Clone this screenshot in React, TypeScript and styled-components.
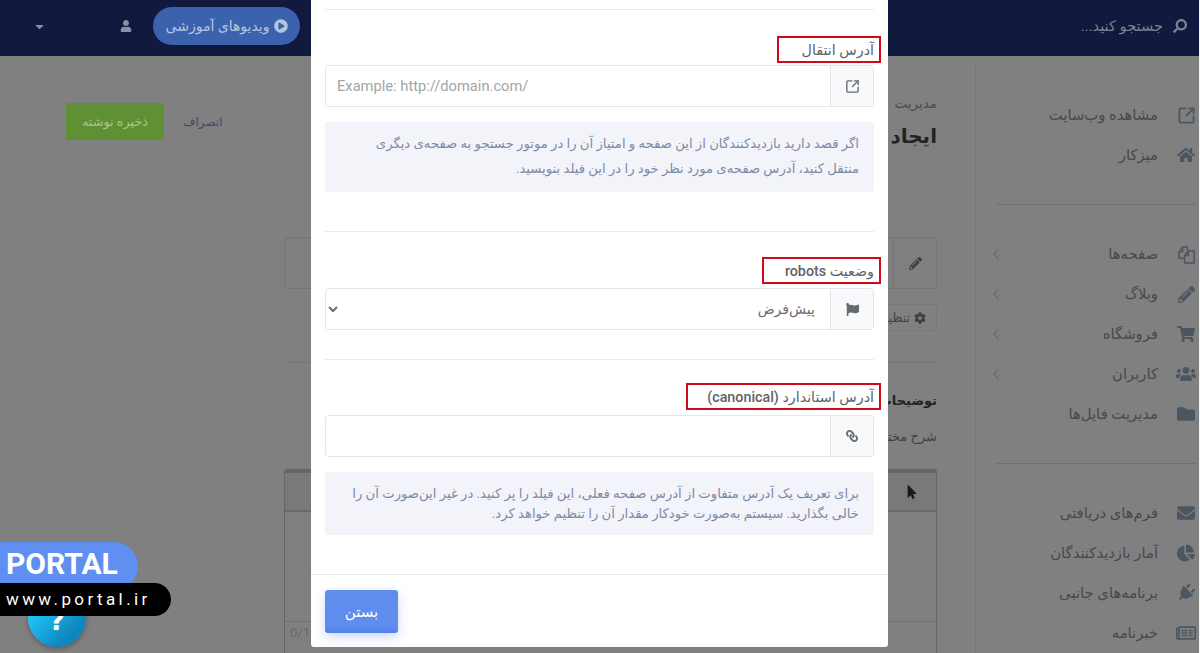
import React from 'react';
import styled, { createGlobalStyle } from 'styled-components';
import {
  FaCaretDown, FaChartPie, FaCog, FaEnvelope, FaFlag, FaFolder, FaHome, FaLink, FaMousePointer,
  FaPencilAlt, FaPlayCircle, FaPlug, FaRegNewspaper, FaSearch, FaShoppingCart, FaUser, FaUsers,
} from 'react-icons/fa';
import { ChevronLeft, SquareArrowOutUpRight } from 'lucide-react';

const GlobalStyle = createGlobalStyle`
  html, body {
    margin: 0;
    padding: 0;
    height: 100%;
    overflow: hidden;
    font-family: Roboto, "DejaVu Sans", sans-serif;
  }
  * {
    box-sizing: border-box;
  }
`;

const Page = styled.div`
  position: relative;
  width: 100%;
  height: 653px;
  overflow: hidden;
  display: flex;
  flex-direction: column;
  background: #808080;
  border-right: 1px solid #f4f4f4;
`;

const Header = styled.header`
  height: 56px;
  flex: none;
  background: #111a3e;
  direction: rtl;
  display: flex;
  align-items: center;
  padding: 0 12px 4px 33px;
`;

const SearchBox = styled.div`
  display: flex;
  align-items: center;
  gap: 10px;
  color: #7d8194;
  font-size: 14.6px;
`;

const Mirrored = styled.span`
  display: inline-flex;
  transform: scaleX(-1);
`;

const HeaderTools = styled.div`
  margin-right: auto;
  display: flex;
  align-items: center;
`;

const VideoPill = styled.div`
  width: 147px;
  height: 38px;
  border-radius: 19px;
  background: #3a62ad;
  color: #b6c5e0;
  font-size: 14px;
  display: flex;
  align-items: center;
  justify-content: center;
  gap: 4px;
  white-space: nowrap;
`;

const UserIcon = styled.span`
  display: inline-flex;
  color: #8b91a5;
  margin-right: 21px;
`;

const CaretIcon = styled.span`
  display: inline-flex;
  color: #8b91a5;
  margin-right: 74px;
`;

const Body = styled.div`
  flex: 1;
  min-height: 0;
  display: flex;
  direction: rtl;
`;

const Sidebar = styled.nav`
  width: 224px;
  flex: none;
  margin-top: 8px;
  padding: 31px 3px 0 20px;
  border-left: 1px solid #787878;
`;

const NavGroup = styled.div`
  padding-bottom: 29px;
  margin-bottom: 29px;
  border-bottom: 1px solid #707070;

  &:last-child {
    border-bottom: 0;
  }
`;

const NavItem = styled.div`
  height: 40px;
  display: flex;
  align-items: center;
  gap: 18px;
  color: #47494b;
  font-size: 14.8px;
  white-space: nowrap;
`;

const NavIcon = styled.span`
  width: 20px;
  display: inline-flex;
  justify-content: center;
  color: #4c5661;
`;

const NavArrow = styled.span`
  margin-right: auto;
  margin-left: -9px;
  display: inline-flex;
  color: #585c60;
`;

const Main = styled.main`
  flex: 1;
  min-width: 0;
  padding: 38px 38px 0 66px;
`;

const TitleRow = styled.div`
  display: flex;
  justify-content: space-between;
  align-items: flex-start;
  height: 143px;
`;

const Crumb = styled.div`
  color: #4a4a4a;
  font-size: 13.5px;
  line-height: 18px;
`;

const PageTitle = styled.h1`
  margin: 9px 0 0;
  color: #1f2327;
  font-size: 20px;
  line-height: 30px;
  font-weight: 700;
`;

const Actions = styled.div`
  display: flex;
  align-items: center;
  gap: 19px;
  margin-top: 9px;
`;

const CancelLink = styled.span`
  color: #3f4a66;
  font-size: 12px;
`;

const SaveButton = styled.div`
  width: 98px;
  height: 37px;
  border-radius: 2px;
  background: #5f9033;
  color: #a9c48e;
  font-size: 12.8px;
  display: flex;
  align-items: center;
  justify-content: center;
`;

const Form = styled.div`
  margin-left: 218px;
`;

const TitleField = styled.div`
  height: 52px;
  border: 1px solid #747474;
  border-radius: 4px;
  display: flex;
`;

const TitleAddon = styled.div`
  width: 43px;
  border-left: 1px solid #747474;
  display: flex;
  align-items: center;
  justify-content: center;
  color: #3f4143;
`;

const SettingsTab = styled.div`
  width: 130px;
  height: 27px;
  margin-top: 15px;
  border: 1px solid #787878;
  border-radius: 2px;
  display: flex;
  align-items: center;
  gap: 4px;
  padding-right: 10px;
  color: #3f4143;
  font-size: 12.5px;
  white-space: nowrap;
`;

const FormDivider = styled.div`
  height: 1px;
  margin-top: 31px;
  background: #767676;
`;

const DescTitle = styled.div`
  margin-top: 28px;
  color: #1f2327;
  font-size: 13px;
  line-height: 20px;
  font-weight: 700;
`;

const DescHint = styled.div`
  margin-top: 16px;
  color: #3f4143;
  font-size: 13px;
  line-height: 20px;
`;

const Editor = styled.div`
  height: 240px;
  margin-top: 22px;
  border: 1px solid #666;
  border-top-width: 4px;
  border-radius: 3px 3px 0 0;
  display: flex;
  flex-direction: column;
`;

const EditorToolbar = styled.div`
  height: 39px;
  flex: none;
  background: #797979;
  border-bottom: 2px solid #686868;
  display: flex;
  align-items: center;
  padding-right: 17px;
  color: #16191d;
`;

const EditorArea = styled.div`
  height: 110px;
  flex: none;
  border-bottom: 1px solid #707070;
`;

const EditorStatus = styled.div`
  direction: ltr;
  padding: 3px 5px;
  color: #6a6a6a;
  font-size: 13px;
`;

const Modal = styled.section`
  position: absolute;
  top: 0;
  left: 311px;
  width: 577px;
  height: 647px;
  padding-top: 9px;
  background: #fff;
  border-radius: 0 0 3px 3px;
  direction: rtl;
  display: flex;
  flex-direction: column;
`;

const ModalBody = styled.div`
  flex: 1;
  padding: 0 14px;
`;

const Section = styled.div`
  border-top: 1px solid #e9ebee;
  padding-top: ${p => p.$top}px;
  height: ${p => p.$height}px;
`;

const LabelRow = styled.div`
  margin: 0 -7px ${p => p.$gap}px 0;
  display: flex;
`;

const MarkedLabel = styled.label`
  width: ${p => p.$width}px;
  height: 27px;
  border: 2px solid #cf0a1a;
  padding: 0 5px;
  display: flex;
  align-items: center;
  color: #606367;
  font-size: 14.3px;
  font-weight: 500;
  white-space: nowrap;
`;

const InputGroup = styled.div`
  height: 42px;
  border: 1px solid #e3e5e9;
  border-radius: 4px;
  display: flex;
  overflow: hidden;
`;

const Addon = styled.span`
  width: 43px;
  flex: none;
  background: #f8f9fa;
  border-left: 1px solid #e3e5e9;
  display: flex;
  align-items: center;
  justify-content: center;
  color: #666a70;
`;

const TextInput = styled.input`
  flex: 1;
  min-width: 0;
  border: 0;
  outline: 0;
  padding: 0 11px;
  direction: ltr;
  font-family: Roboto, sans-serif;
  font-size: 14.7px;
  color: #495057;

  &::placeholder {
    color: #a3a5a8;
    opacity: 1;
  }
`;

const SelectInput = styled.select`
  flex: 1;
  min-width: 0;
  border: 0;
  outline: 0;
  padding: 0 11px;
  background: #fff;
  font-family: inherit;
  font-size: 14px;
  color: #6a6d71;
`;

const HelpBox = styled.p`
  margin: 15px 0 0;
  height: ${p => p.$height}px;
  padding: ${p => p.$pad}px 15px 0 10px;
  background: #f2f4f9;
  border-radius: 3px;
  color: #7f89a8;
  font-size: 13.2px;
  line-height: ${p => p.$line}px;
  white-space: nowrap;
`;

const ModalFooter = styled.footer`
  height: 73px;
  flex: none;
  border-top: 1px solid #e9ebee;
  padding: 15px 14px 0;
  display: flex;
  justify-content: flex-end;
`;

const CloseButton = styled.button`
  width: 73px;
  height: 43px;
  border: 0;
  border-radius: 3px;
  background: linear-gradient(#5f8dee 85%, #4f80e8);
  box-shadow: 0 4px 12px rgba(82, 130, 235, 0.3);
  color: #fff;
  font-family: inherit;
  font-size: 15px;
  font-weight: 500;
`;

const HelpBubble = styled.div`
  position: absolute;
  left: 28px;
  top: 589px;
  width: 58px;
  height: 58px;
  border-radius: 50%;
  background: linear-gradient(135deg, #1fc0f2 30%, #0f86bf 75%);
  box-shadow: 0 2px 5px rgba(0, 0, 0, 0.3);
  color: #fff;
  font-family: "DejaVu Sans", sans-serif;
  font-size: 27px;
  font-weight: 700;
  line-height: 64px;
  text-align: center;
`;

const BrandPill = styled.div`
  position: absolute;
  left: 0;
  top: 542px;
  width: 138px;
  height: 48px;
  padding: 5px 0 0 6px;
  border-radius: 0 24px 24px 0;
  background: #5f8ff0;
  color: #fff;
  font-family: Roboto, sans-serif;
  font-size: 30px;
  font-weight: 700;
  line-height: 34px;
`;

const BrandUrl = styled.div`
  position: absolute;
  left: 0;
  top: 583px;
  width: 171px;
  height: 33px;
  padding-left: 6px;
  border-radius: 0 17px 17px 0;
  background: #000;
  color: #fff;
  font-family: Roboto, sans-serif;
  font-size: 17px;
  letter-spacing: 3.4px;
  line-height: 33px;
`;

const PagesIcon = () => (
  <svg width="19" height="19" viewBox="0 0 20 20" fill="none" stroke="currentColor" strokeWidth="1.6" strokeLinejoin="round">
    <path d="M8 14H2V7l4-5h5v4" />
    <path d="M2 7h4V2" />
    <path d="M8 11l4-5h6v13H8z" />
    <path d="M8 11h4V6" />
  </svg>
);

const navGroups = [
  [
    { label: 'مشاهده وب‌سایت', icon: <SquareArrowOutUpRight size={19} strokeWidth={2.4} /> },
    { label: 'میزکار', icon: <FaHome size={18} /> },
  ],
  [
    { label: 'صفحه‌ها', icon: <PagesIcon />, arrow: true },
    { label: 'وبلاگ', icon: <FaPencilAlt size={17} />, arrow: true },
    { label: 'فروشگاه', icon: <FaShoppingCart size={18} />, arrow: true },
    { label: 'کاربران', icon: <FaUsers size={20} />, arrow: true },
    { label: 'مدیریت فایل‌ها', icon: <FaFolder size={18} /> },
  ],
  [
    { label: 'فرم‌های دریافتی', icon: <FaEnvelope size={18} /> },
    { label: 'آمار بازدیدکنندگان', icon: <FaChartPie size={18} /> },
    { label: 'برنامه‌های جانبی', icon: <FaPlug size={18} style={{ transform: 'rotate(45deg)' }} /> },
    { label: 'خبرنامه', icon: <FaRegNewspaper size={20} /> },
  ],
];

export default function App() {
  return (
    <Page>
      <GlobalStyle />
      <Header>
        <SearchBox>
          <Mirrored><FaSearch size={14} /></Mirrored>
          جستجو کنید...
        </SearchBox>
        <HeaderTools>
          <VideoPill>
            <FaPlayCircle size={14} />
            ویدیوهای آموزشی
          </VideoPill>
          <UserIcon><FaUser size={12} /></UserIcon>
          <CaretIcon><FaCaretDown size={13} /></CaretIcon>
        </HeaderTools>
      </Header>

      <Body>
        <Sidebar>
          {navGroups.map((group, i) => (
            <NavGroup key={i}>
              {group.map(item => (
                <NavItem key={item.label}>
                  <NavIcon>{item.icon}</NavIcon>
                  {item.label}
                  {item.arrow && <NavArrow><ChevronLeft size={18} strokeWidth={1.2} /></NavArrow>}
                </NavItem>
              ))}
            </NavGroup>
          ))}
        </Sidebar>

        <Main>
          <TitleRow>
            <div>
              <Crumb>مدیریت</Crumb>
              <PageTitle>ایجاد نوشته</PageTitle>
            </div>
            <Actions>
              <CancelLink>انصراف</CancelLink>
              <SaveButton>ذخیره نوشته</SaveButton>
            </Actions>
          </TitleRow>

          <Form>
            <TitleField>
              <TitleAddon><FaPencilAlt size={13} /></TitleAddon>
            </TitleField>
            <SettingsTab><FaCog size={12} /> تنظیمات پیشرفته</SettingsTab>
            <FormDivider />
            <DescTitle>توضیحات</DescTitle>
            <DescHint>شرح مختصر</DescHint>
            <Editor>
              <EditorToolbar><FaMousePointer size={14} /></EditorToolbar>
              <EditorArea />
              <EditorStatus>0/1000</EditorStatus>
            </Editor>
          </Form>
        </Main>
      </Body>

      <HelpBubble>?</HelpBubble>
      <BrandPill>PORTAL</BrandPill>
      <BrandUrl>www.portal.ir</BrandUrl>

      <Modal>
        <ModalBody>
          <Section $top={26} $height={222}>
            <LabelRow $gap={2}><MarkedLabel $width={104}>آدرس انتقال</MarkedLabel></LabelRow>
            <InputGroup>
              <Addon><SquareArrowOutUpRight size={15} strokeWidth={2.2} /></Addon>
              <TextInput placeholder="Example: http://domain.com/" />
            </InputGroup>
            <HelpBox $height={70} $pad={9} $line={25}>
              اگر قصد دارید بازدیدکنندگان از این صفحه و امتیاز آن را در موتور جستجو به صفحه‌ی دیگری
              <br />
              منتقل کنید، آدرس صفحه‌ی مورد نظر خود را در این فیلد بنویسید.
            </HelpBox>
          </Section>
          <Section $top={25} $height={128}>
            <LabelRow $gap={4}><MarkedLabel $width={119}>وضعیت robots</MarkedLabel></LabelRow>
            <InputGroup>
              <Addon><FaFlag size={13} /></Addon>
              <SelectInput defaultValue="default">
                <option value="default">پیش‌فرض</option>
              </SelectInput>
            </InputGroup>
          </Section>
          <Section $top={23} $height={215}>
            <LabelRow $gap={5}><MarkedLabel $width={195}>آدرس استاندارد (canonical)</MarkedLabel></LabelRow>
            <InputGroup>
              <Addon><Mirrored><FaLink size={12} /></Mirrored></Addon>
              <TextInput />
            </InputGroup>
            <HelpBox $height={63} $pad={12} $line={20}>
              برای تعریف یک آدرس متفاوت از آدرس صفحه فعلی، این فیلد را پر کنید. در غیر این‌صورت آن را
              <br />
              خالی بگذارید. سیستم به‌صورت خودکار مقدار آن را تنظیم خواهد کرد.
            </HelpBox>
          </Section>
        </ModalBody>
        <ModalFooter>
          <CloseButton>بستن</CloseButton>
        </ModalFooter>
      </Modal>
    </Page>
  );
}
